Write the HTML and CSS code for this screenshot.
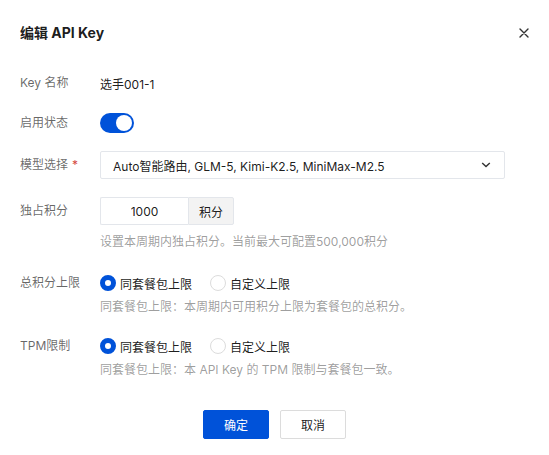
FILE: index.html
```html
<!DOCTYPE html>
<html lang="zh-CN">
<head>
<meta charset="utf-8">
<title>编辑 API Key</title>
<link rel="stylesheet" href="styles.css">
</head>
<body>
<div class="dialog">
  <div class="header">
    <div class="title">编辑 API Key</div>
    <button class="close" aria-label="关闭">
      <svg width="12" height="12" viewBox="0 0 12 12"><path d="M2 2L10 10M10 2L2 10" stroke="#333" stroke-width="1.4" stroke-linecap="round"/></svg>
    </button>
  </div>
  <div class="form">
    <div class="item item-name">
      <div class="label">Key 名称</div>
      <div class="control"><span class="value">选手001-1</span></div>
    </div>
    <div class="item item-status">
      <div class="label">启用状态</div>
      <div class="control"><span class="switch"><span class="knob"></span></span></div>
    </div>
    <div class="item item-model">
      <div class="label">模型选择<span class="req">*</span></div>
      <div class="control">
        <div class="select">
          <span>Auto智能路由, GLM-5, Kimi-K2.5, MiniMax-M2.5</span>
          <svg width="10" height="6" viewBox="0 0 10 6"><path d="M1.2 1L5 4.6L8.8 1" fill="none" stroke="#333" stroke-width="1.4"/></svg>
        </div>
      </div>
    </div>
    <div class="item item-points">
      <div class="label">独占积分</div>
      <div class="control">
        <div class="input-group">
          <div class="input">1000</div>
          <div class="addon">积分</div>
        </div>
      </div>
    </div>
    <div class="help help-points">设置本周期内独占积分。当前最大可配置500,000积分</div>
    <div class="item item-total">
      <div class="label">总积分上限</div>
      <div class="control radios">
        <span class="radio checked"><span class="dot"></span>同套餐包上限</span>
        <span class="radio"><span class="dot"></span>自定义上限</span>
      </div>
    </div>
    <div class="help">同套餐包上限：本周期内可用积分上限为套餐包的总积分。</div>
    <div class="item item-tpm">
      <div class="label">TPM限制</div>
      <div class="control radios">
        <span class="radio checked"><span class="dot"></span>同套餐包上限</span>
        <span class="radio"><span class="dot"></span>自定义上限</span>
      </div>
    </div>
    <div class="help">同套餐包上限：本 API Key 的 TPM 限制与套餐包一致。</div>
  </div>
  <div class="footer">
    <button class="btn primary">确定</button>
    <button class="btn">取消</button>
  </div>
</div>
</body>
</html>
```
FILE: styles.css
```css
* { box-sizing: border-box; }
html, body { margin: 0; padding: 0; background: #fff; }
body {
  font-family: "Inter", "Noto Sans CJK SC", sans-serif;
  font-size: 12px;
  color: rgba(0,0,0,0.9);
}
.dialog { width: 549px; height: 455px; padding: 22px 20px 0 20px; }
.header { display: flex; align-items: center; justify-content: space-between; height: 22px; }
.title { font-size: 14px; font-weight: 700; line-height: 22px; color: rgba(0,0,0,0.9); }
.close { border: 0; background: none; padding: 0; width: 16px; height: 16px; display: flex; align-items: center; justify-content: center; margin-right: -3px; }
.form { margin-top: 25px; }
.item { display: flex; align-items: center; min-height: 28px; }
.label { width: 80px; flex: none; color: rgba(0,0,0,0.6); line-height: 20px; }
.req { color: #d54941; margin-left: 4px; }
.control { flex: 1; display: flex; align-items: center; }
.value { color: rgba(0,0,0,0.9); }
.item-status { margin-top: 12px; }
.item-model { margin-top: 14px; }
.item-points { margin-top: 18px; }
.item-total { margin-top: 17px; }
.item-tpm { margin-top: 15px; }
.switch { width: 34px; height: 20px; border-radius: 10px; background: #0052d9; display: flex; align-items: center; justify-content: flex-end; padding: 2px; }
.knob { width: 16px; height: 16px; border-radius: 50%; background: #fff; }
.select { width: 405px; height: 28px; border: 1px solid #e3e6eb; border-radius: 2px; display: flex; align-items: center; justify-content: space-between; padding: 0 13px 0 12px; }
.input-group { display: flex; height: 28px; }
.input { width: 88px; border: 1px solid #e3e6eb; border-right: 0; border-radius: 2px 0 0 2px; display: flex; align-items: center; justify-content: center; }
.addon { width: 46px; border: 1px solid #e3e6eb; background: #f3f3f3; border-radius: 0 2px 2px 0; display: flex; align-items: center; justify-content: center; }
.help { margin-left: 80px; color: rgba(0,0,0,0.4); line-height: 20px; }
.help-points { margin-top: 7px; }
.radios { gap: 18px; }
.radio { display: flex; align-items: center; gap: 4px; }
.dot { width: 16px; height: 16px; border-radius: 50%; border: 1px solid #dcdcdc; background: #fff; }
.radio.checked .dot { border: 5px solid #0052d9; }
.footer { display: flex; justify-content: center; gap: 11px; margin-top: 30px; }
.btn { width: 66px; height: 29px; border: 1px solid #dcdcdc; background: #fff; border-radius: 2px; font-family: inherit; font-size: 12px; color: rgba(0,0,0,0.9); padding: 0; }
.btn.primary { background: #0052d9; border-color: #0052d9; color: #fff; }
```
